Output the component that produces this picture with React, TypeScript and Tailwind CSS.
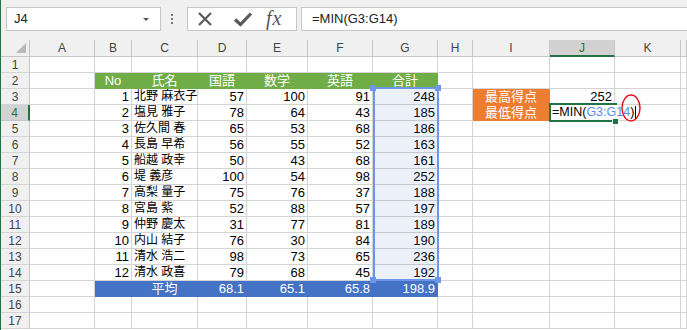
import React from 'react';

const W = ['w-[65px]', 'w-[37px]', 'w-[66px]', 'w-[49px]', 'w-[61px]', 'w-[65px]', 'w-[65px]', 'w-[35px]', 'w-[77px]', 'w-[65px]', 'w-[66px]', 'flex-1'];
const LETTERS = ['A', 'B', 'C', 'D', 'E', 'F', 'G', 'H', 'I', 'J', 'K', ''];

const FILL = {
  none: 'border-[#d4d4d4] text-black',
  green: 'bg-[#70ad47] border-[#70ad47] text-white',
  blue: 'bg-[#4472c4] border-[#4472c4] text-white',
  orange: 'bg-[#ed7d31] border-[#ed7d31] text-white',
};

const ALIGN = {
  l: 'justify-start pl-[2px]',
  c: 'justify-center',
  r: 'justify-end pr-[2px]',
};

type Cell = { v?: string; a?: keyof typeof ALIGN; f?: keyof typeof FILL; s?: string };

const students: [string, number, number, number, number][] = [
  ['北野 麻衣子', 57, 100, 91, 248],
  ['塩見 雅子', 78, 64, 43, 185],
  ['佐久間 春', 65, 53, 68, 186],
  ['長島 早希', 56, 55, 52, 163],
  ['船越 政幸', 50, 43, 68, 161],
  ['堤 義彦', 100, 54, 98, 252],
  ['高梨 量子', 75, 76, 37, 188],
  ['宮島 紫', 52, 88, 57, 197],
  ['仲野 慶太', 31, 77, 81, 189],
  ['内山 結子', 76, 30, 84, 190],
  ['清水 浩二', 98, 73, 65, 236],
  ['清水 政喜', 79, 68, 45, 192],
];

// build the 17 visible rows
function buildRow(r: number): Cell[] {
  const cells: Cell[] = LETTERS.map(() => ({}));
  if (r === 2) {
    ['No', '氏名', '国語', '数学', '英語', '合計'].forEach((t, i) => {
      cells[i + 1] = { v: t, a: 'c', f: 'green', s: 'text-[13px]' };
    });
  }
  if (r >= 3 && r <= 14) {
    const [name, ...nums] = students[r - 3];
    cells[1] = { v: String(r - 2), a: 'r', s: 'text-[13px]' };
    cells[2] = { v: name, a: 'l', s: 'text-[12px]' };
    nums.forEach((n, i) => {
      cells[i + 3] = { v: String(n), a: 'r', s: 'text-[13px]' };
    });
  }
  if (r === 15) {
    cells[1] = { f: 'blue' };
    cells[2] = { v: '平均', a: 'c', f: 'blue', s: 'text-[13px]' };
    ['68.1', '65.1', '65.8', '198.9'].forEach((t, i) => {
      cells[i + 3] = { v: t, a: 'r', f: 'blue', s: 'text-[13px]' };
    });
  }
  if (r === 3) {
    cells[8] = { v: '最高得点', a: 'c', f: 'orange', s: 'text-[13px]' };
    cells[9] = { v: '252', a: 'r', s: 'text-[13px]' };
  }
  if (r === 4) {
    cells[8] = { v: '最低得点', a: 'c', f: 'orange', s: 'text-[13px]' };
  }
  return cells;
}

function Toolbar() {
  return (
    <div className="h-[40px] bg-[#f0f0f0] flex items-start">
      <div className="ml-[5px] mt-[7px] w-[155px] h-[24px] border border-[#c6c6c6] bg-white flex items-center justify-between pl-[7px] pr-[11px] text-[13px] text-[#222]">
        <span>J4</span>
        <span className="w-0 h-0 border-l-[3px] border-r-[3px] border-t-[3px] border-l-transparent border-r-transparent border-t-[#555]" />
      </div>
      <div className="ml-[10px] mt-[14px] flex flex-col gap-[2px]">
        <span className="w-[2px] h-[2px] bg-[#777]" />
        <span className="w-[2px] h-[2px] bg-[#777]" />
        <span className="w-[2px] h-[2px] bg-[#777]" />
      </div>
      <div className="ml-[14px] mt-[7px] w-[110px] h-[24px] border border-[#c6c6c6] bg-white flex items-center">
        <svg width="16" height="16" viewBox="0 0 16 16" className="ml-[9px]">
          <path d="M2 2 L14 14 M14 2 L2 14" stroke="#5a5a5a" strokeWidth="2.2" fill="none" />
        </svg>
        <svg width="20" height="16" viewBox="0 0 20 16" className="ml-[20px]">
          <path d="M2 8.5 L7.5 13.5 L18 2.5" stroke="#5a5a5a" strokeWidth="3.2" fill="none" />
        </svg>
        <span className="ml-[13px] font-['Liberation_Serif',serif] italic text-[20px] tracking-[1px] leading-none text-[#555] -mt-[2px]">fx</span>
      </div>
      <div className="ml-[4px] mt-[7px] flex-1 h-[24px] border border-r-0 border-[#c6c6c6] bg-white flex items-center pl-[10px] text-[13px] text-[#222]">
        =MIN(G3:G14)
      </div>
    </div>
  );
}

function HeaderRow() {
  return (
    <div className="flex h-[17px] bg-[#f0f0f0]">
      <div className="w-[29px] h-full border-r border-b border-[#c6c6c6] flex items-end justify-end pr-[3px] pb-[3px]">
        <span className="w-0 h-0 border-b-[10px] border-l-[10px] border-l-transparent border-b-[#b9b9b9]" />
      </div>
      {LETTERS.map((l, i) => {
        const active = l === 'J';
        return (
          <div
            key={i}
            className={`${W[i]} h-full border-r flex items-center justify-center text-[12px] ${
              active
                ? 'bg-[#d2d2d2] text-[#217346] border-r-[#c6c6c6] border-b-2 border-b-[#217346]'
                : 'text-[#444] border-r-[#c6c6c6] border-b border-b-[#c6c6c6]'
            }`}
          >
            {l}
          </div>
        );
      })}
    </div>
  );
}

function Row({ r }: { r: number }) {
  const cells = buildRow(r);
  const active = r === 4;
  return (
    <div className="flex h-[16px]">
      <div
        className={`w-[29px] h-full border-b flex items-center justify-center text-[12px] ${
          active
            ? 'bg-[#d2d2d2] text-[#217346] border-r-2 border-r-[#217346] border-b-[#c6c6c6]'
            : 'bg-[#f0f0f0] text-[#444] border-r border-r-[#c6c6c6] border-b-[#d4d4d4]'
        }`}
      >
        {r}
      </div>
      {cells.map((c, i) => (
        <div
          key={i}
          className={`${W[i]} h-full border-r border-b flex items-end leading-[15px] whitespace-nowrap overflow-visible ${FILL[c.f ?? 'none']} ${ALIGN[c.a ?? 'l']} ${c.s ?? ''}`}
        >
          {c.v}
        </div>
      ))}
    </div>
  );
}

export default function App() {
  const rows = Array.from({ length: 17 }, (_, i) => i + 1);
  return (
    <div className="relative w-[687px] h-[330px] overflow-hidden bg-white flex font-['Liberation_Sans','Noto_Sans_CJK_JP',sans-serif]">
      <div className="w-[1px] h-full bg-[#217346]" />
      <div className="flex-1 flex flex-col">
        <Toolbar />
        <HeaderRow />
        {rows.map((r) => (
          <Row key={r} r={r} />
        ))}
      </div>

      {/* range highlight G3:G14 */}
      <div className="absolute left-[373px] top-[87px] w-[66px] h-[194px] border-2 border-[#6f95ea] bg-[#4472c4]/10" />
      <span className="absolute left-[370px] top-[85px] w-[6px] h-[6px] bg-[#6f95ea]" />
      <span className="absolute left-[435px] top-[85px] w-[6px] h-[6px] bg-[#6f95ea]" />
      <span className="absolute left-[370px] top-[277px] w-[6px] h-[6px] bg-[#6f95ea]" />
      <span className="absolute left-[435px] top-[277px] w-[6px] h-[6px] bg-[#6f95ea]" />

      {/* active cell J4 in edit mode */}
      <div className="absolute left-[549px] top-[103px] w-[68px] h-[19px] border-2 border-[#217346]" />
      <div className="absolute left-[551px] top-[105px] h-[14px] pl-[1px] pr-[2px] bg-white flex items-end leading-[14px] text-[12.5px] whitespace-nowrap">
        <span>=MIN(</span>
        <span className="text-[#5b8de8]">G3:G14</span>
        <span>)</span>
        <span className="ml-[1px] w-[1px] h-[13px] bg-black self-center" />
      </div>
      <span className="absolute left-[613px] top-[119px] w-[5px] h-[5px] bg-[#217346] outline outline-1 outline-white" />

      {/* red annotation ellipse */}
      <svg className="absolute left-[619px] top-[93px]" width="24" height="30" viewBox="0 0 24 30">
        <ellipse cx="12" cy="15" rx="9" ry="13" stroke="#e8141c" strokeWidth="1.5" fill="none" />
      </svg>
    </div>
  );
}
